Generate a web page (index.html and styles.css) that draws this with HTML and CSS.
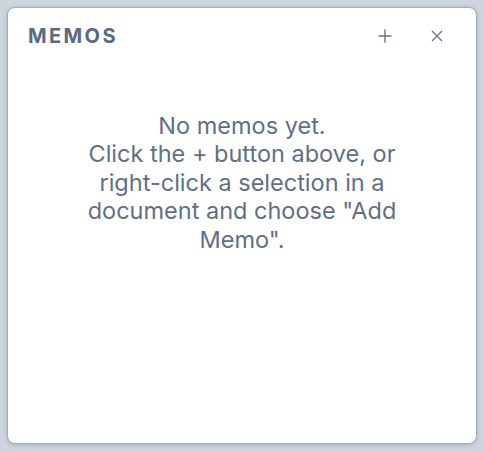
FILE: index.html
```html
<!DOCTYPE html>
<html lang="en">
<head>
<meta charset="utf-8">
<title>Memos</title>
<link rel="stylesheet" href="styles.css">
</head>
<body>
<section class="panel">
  <header class="panel-header">
    <h2 class="panel-title">MEMOS</h2>
    <div class="panel-actions">
      <button class="icon-btn" aria-label="Add memo">
        <svg width="16" height="16" viewBox="0 0 16 16"><path d="M8 1.5v13M1.5 8h13" stroke="currentColor" stroke-width="1.4" fill="none"/></svg>
      </button>
      <button class="icon-btn" aria-label="Close">
        <svg width="16" height="16" viewBox="0 0 16 16"><path d="M3 3l10 10M13 3L3 13" stroke="currentColor" stroke-width="1.4" fill="none"/></svg>
      </button>
    </div>
  </header>
  <div class="empty">
    No memos yet.<br>
    Click the + button above, or right-click a selection in a document and choose "Add Memo".
  </div>
</section>
</body>
</html>
```
FILE: styles.css
```css
html, body {
  margin: 0;
  height: 100%;
}
body {
  background: #cfd5de;
  padding: 7px 7px 8px 7px;
  box-sizing: border-box;
  font-family: Inter, "Noto Sans", sans-serif;
}
.panel {
  height: 100%;
  box-sizing: border-box;
  background: #fff;
  border: 1.5px solid #a3adbd;
  border-radius: 8px;
  box-shadow: 0 1px 4px rgba(90, 105, 130, 0.35);
  display: flex;
  flex-direction: column;
}
.panel-header {
  display: flex;
  align-items: center;
  justify-content: space-between;
  padding: 14px 31px 0 20px;
  height: 28px;
}
.panel-title {
  margin: 0;
  font-size: 20px;
  font-weight: 700;
  letter-spacing: 2.4px;
  color: #5a6a82;
}
.panel-actions {
  display: flex;
  gap: 36px;
}
.icon-btn {
  border: 0;
  background: none;
  padding: 0;
  color: #66758c;
  display: flex;
  cursor: pointer;
}
.empty {
  margin-top: 62px;
  padding: 0 70px;
  text-align: center;
  font-size: 23.5px;
  line-height: 28.4px;
  color: #5f6f87;
}
```
